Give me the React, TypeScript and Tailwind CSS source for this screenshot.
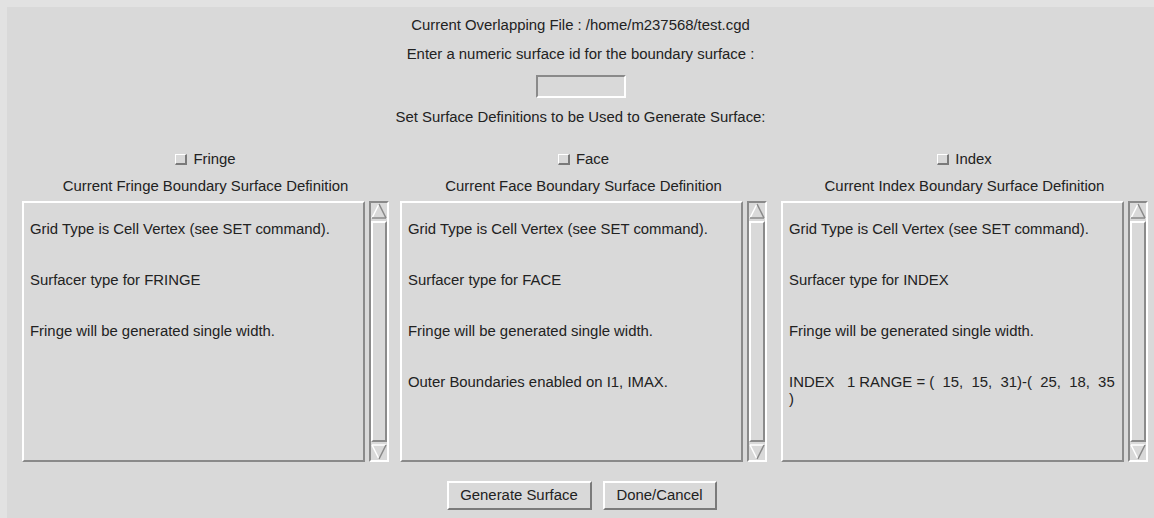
import React from "react";

interface PanelProps {
  name: string;
  label: string;
  text: string;
  className?: string;
}

const UpArrow = () => (
  <svg width="16" height="16" viewBox="0 0 16 16" className="block">
    <line x1="1" y1="15" x2="8" y2="1" stroke="#ffffff" strokeWidth="1.5" />
    <line x1="8" y1="1" x2="15" y2="15" stroke="#8a8a8a" strokeWidth="1.5" />
    <line x1="1" y1="15" x2="15" y2="15" stroke="#8a8a8a" strokeWidth="1.5" />
  </svg>
);

const DownArrow = () => (
  <svg width="16" height="16" viewBox="0 0 16 16" className="block">
    <line x1="1" y1="1" x2="15" y2="1" stroke="#ffffff" strokeWidth="1.5" />
    <line x1="1" y1="1" x2="8" y2="15" stroke="#ffffff" strokeWidth="1.5" />
    <line x1="15" y1="1" x2="8" y2="15" stroke="#8a8a8a" strokeWidth="1.5" />
  </svg>
);

const Scrollbar = () => (
  <div className="w-[20px] flex flex-col border-2 border-t-[#8a8a8a] border-l-[#8a8a8a] border-b-white border-r-white">
    <UpArrow />
    <div className="flex-1 my-[2px] border-2 border-t-white border-l-white border-b-[#8a8a8a] border-r-[#8a8a8a]" />
    <DownArrow />
  </div>
);

const Panel: React.FC<PanelProps> = ({ name, label, text, className }) => (
  <div className={`w-[367px] flex flex-col items-center ${className ?? ""}`}>
    <div className="h-[17px] flex items-center gap-[6px]">
      <div className="w-[12px] h-[11px] border border-t-white border-l-white border-b-[#7a7a7a] border-r-[#7a7a7a] border-b-2 border-r-2" />
      <span>{name}</span>
    </div>
    <div className="mt-[10px] h-[17px]">{label}</div>
    {/* text area + scrollbar */}
    <div className="mt-[6px] w-full h-[261px] flex gap-[4px]">
      <div className="flex-1 border-2 border-t-white border-l-white border-b-[#8a8a8a] border-r-[#8a8a8a] pl-[6px] pt-[18px] whitespace-pre-wrap">
        {text}
      </div>
      <Scrollbar />
    </div>
  </div>
);

const common =
  "Grid Type is Cell Vertex (see SET command).\n\n\nSurfacer type for ";

export default function App() {
  return (
    <div className="w-[1154px] h-[518px] bg-[#d9d9d9] border-t-[7px] border-l-[7px] border-[#e2e2e2] font-['Liberation_Sans',Arial,sans-serif] text-[14.9px] leading-[17px] text-[#222]">
      <div className="flex flex-col items-center pt-[10px]">
        <div>Current Overlapping File : /home/m237568/test.cgd</div>
        <div className="mt-[12px]">
          Enter a numeric surface id for the boundary surface :
        </div>
        <div className="mt-[12px] w-[90px] h-[23px] border-2 border-t-[#8a8a8a] border-l-[#8a8a8a] border-b-white border-r-white" />
        <div className="mt-[11px]">
          Set Surface Definitions to be Used to Generate Surface:
        </div>
      </div>

      <div className="mt-[25px] flex pl-[15px]">
        <Panel
          name="Fringe"
          label="Current Fringe Boundary Surface Definition"
          text={common + "FRINGE\n\n\nFringe will be generated single width."}
          className="mr-[11px]"
        />
        <Panel
          name="Face"
          label="Current Face Boundary Surface Definition"
          text={
            common +
            "FACE\n\n\nFringe will be generated single width.\n\n\nOuter Boundaries enabled on I1, IMAX."
          }
          className="mr-[14px]"
        />
        <Panel
          name="Index"
          label="Current Index Boundary Surface Definition"
          text={
            common +
            "INDEX\n\n\nFringe will be generated single width.\n\n\nINDEX   1 RANGE = (  15,  15,  31)-(  25,  18,  35\n)"
          }
        />
      </div>

      <div className="mt-[19px] flex justify-center gap-[11px] pl-[2px]">
        <button className="w-[145px] h-[29px] border-2 border-t-white border-l-white border-b-[#7a7a7a] border-r-[#7a7a7a]">
          Generate Surface
        </button>
        <button className="w-[114px] h-[29px] border-2 border-t-white border-l-white border-b-[#7a7a7a] border-r-[#7a7a7a]">
          Done/Cancel
        </button>
      </div>
    </div>
  );
}
